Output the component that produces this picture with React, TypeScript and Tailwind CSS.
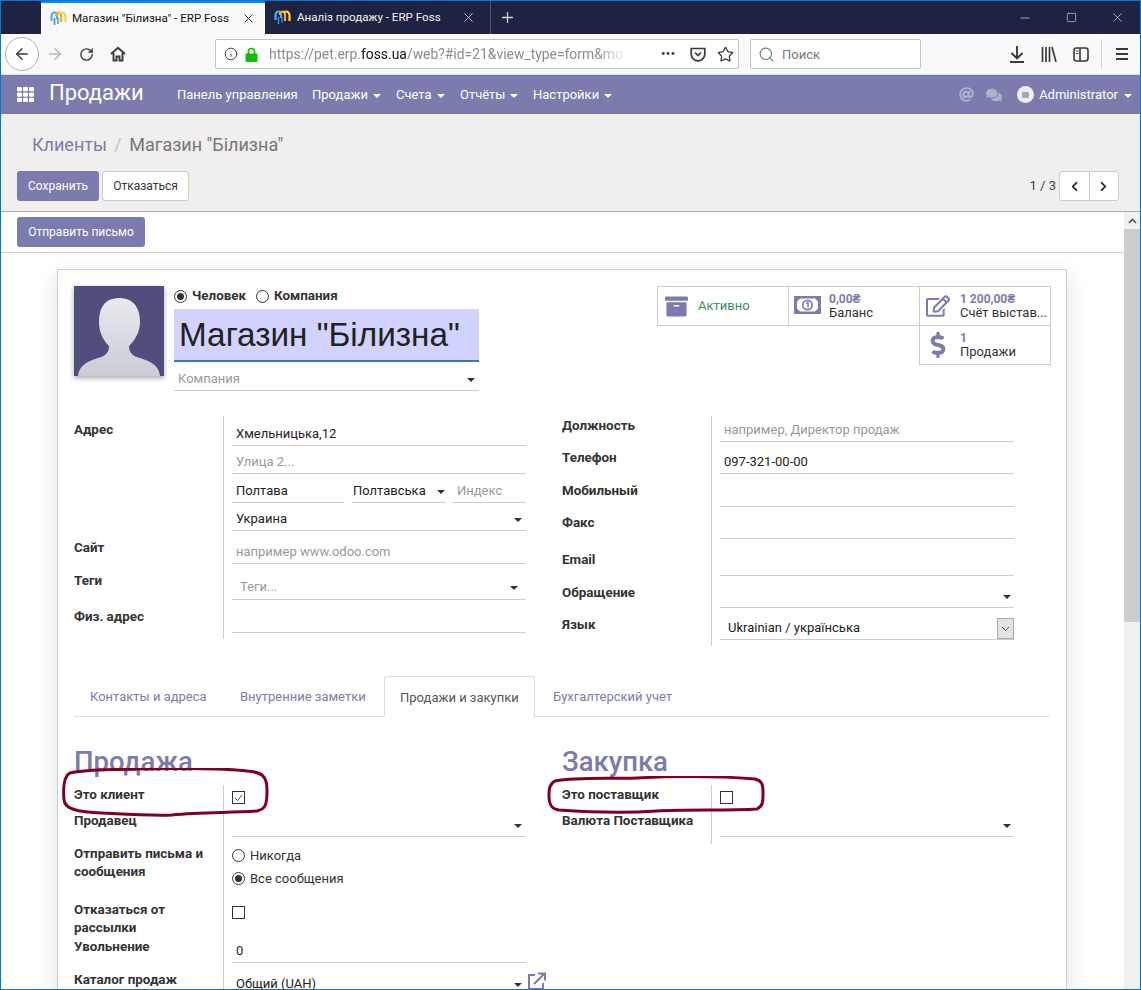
import { ArrowLeft, ArrowRight, RotateCw, Search, Star, Info, Plus, X, Minus, Square } from "lucide-react";
import { FaArchive, FaAt, FaChevronLeft, FaChevronRight, FaComments, FaDollarSign, FaRegEdit, FaTh } from "react-icons/fa";
import type { ReactNode } from "react";

function TabLogo() {
  return (
    <svg width="17" height="15" viewBox="0 0 17 15" fill="none" className="shrink-0">
      <path d="M1.5 10V6c0-3 1.500-4.500 3-4.500S7 3 7 6v2" stroke="#4aaeea" strokeWidth="2.2" />
      <path d="M4.500 14V7" stroke="#2f8fd6" strokeWidth="1.6" />
      <path d="M6 5c0-2 1-3.500 2.500-3.500S11 3 11 5v6" stroke="#f6a623" strokeWidth="2.2" />
      <path d="M9.500 3c.5-1 1.500-1.500 2.500-1.500 2 0 3.500 1.500 3.500 4.500v5" stroke="#fbd43c" strokeWidth="2.2" />
      <path d="M8 13V7" stroke="#2f8fd6" strokeWidth="1.4" />
    </svg>
  );
}

function BrowserTab({ title, active }: { title: string; active?: boolean }) {
  return (
    <div
      className={
        active
          ? "flex h-full w-[224px] items-center gap-[5px] border-t-2 border-[#0a84ff] bg-[#f9f9fa] pr-[9px] pl-[9px] text-[#111]"
          : "flex h-full w-[226px] items-center gap-[6px] border-r border-[#53566f] pr-[14px] pl-[9px] text-[#f4f4f6]"
      }
    >
      <TabLogo />
      <span className="flex-1 text-[11.6px] whitespace-nowrap">{title}</span>
      <X size={15} strokeWidth={1.6} className={active ? "text-[#333]" : "text-[#b9bac6]"} />
    </div>
  );
}

function BrowserChrome() {
  return (
    <>
      <div className="flex h-[33px] items-stretch bg-[#1e2343]">
        <div className="w-[40px]" />
        <BrowserTab title={'Магазин "Білизна" - ERP Foss'} active />
        <BrowserTab title="Аналіз продажу - ERP Foss" />
        <div className="flex w-[32px] items-center justify-center text-[#d5d6dd]">
          <Plus size={17} strokeWidth={1.8} />
        </div>
        <div className="ml-auto flex items-center text-white">
          <div className="flex w-[46px] justify-center"><Minus size={14} strokeWidth={1} /></div>
          <div className="flex w-[46px] justify-center"><Square size={11} strokeWidth={1.2} /></div>
          <div className="flex w-[46px] justify-center"><X size={15} strokeWidth={1} /></div>
        </div>
      </div>
      <div className="flex h-[41px] items-center border-b border-[#dcdcde] bg-[#f9f9fa] text-[#3a3a3c]">
        <div className="ml-[4px] flex h-[34px] w-[34px] items-center justify-center rounded-full border border-[#b1b1b3] bg-white">
          <ArrowLeft size={18} strokeWidth={1.8} />
        </div>
        <ArrowRight size={18} strokeWidth={1.8} className="ml-[7px] text-[#b4b4b6]" />
        <RotateCw size={15} strokeWidth={2.2} className="ml-[15px]" />
        <svg width="16" height="16" viewBox="0 0 16 16" className="ml-[16px]" fill="none" stroke="#3a3a3c" strokeWidth="1.9">
          <path d="M1 8l7-6.3L15 8" />
          <path d="M3.500 7v7.500h3v-4h3v4h3V7" />
        </svg>
        <div className="ml-[89px] flex h-[30px] w-[524px] items-center rounded-[2px] border border-[#c4c4c6] bg-white">
          <Info size={14} strokeWidth={1.6} className="ml-[8px]" />
          <svg width="13" height="15" viewBox="0 0 13 15" className="ml-[7px]">
            <path d="M3.500 7V4.500a3 3 0 0 1 6 0V7" fill="none" stroke="#12bc00" strokeWidth="1.7" />
            <rect x="0.500" y="6.500" width="12" height="8.500" rx="1" fill="#12bc00" />
          </svg>
          <span className="mt-[1px] ml-[11px] w-[372px] overflow-hidden text-[13.9px] whitespace-nowrap text-[#8b8b8f] [mask-image:linear-gradient(to_right,black_88%,transparent_96%)]">
            https://pet.erp.<span className="text-[#111]">foss.ua</span>/web?#id=21&view_type=form&mo
          </span>
          <span className="ml-[20px] text-[12px] font-bold tracking-[0.5px]">•••</span>
          <svg width="16" height="15" viewBox="0 0 16 15" className="ml-[15px]" fill="none" stroke="#3a3a3c" strokeWidth="1.7">
            <path d="M1.200 1.500h13.600v5.500a6.800 6.800 0 0 1-13.600 0z" />
            <path d="M5 5.500l3 3 3-3" />
          </svg>
          <Star size={17} strokeWidth={1.8} className="ml-[11px]" />
        </div>
        <div className="ml-[11px] flex h-[30px] w-[171px] items-center rounded-[2px] border border-[#c4c4c6] bg-white">
          <Search size={17} strokeWidth={1.6} className="ml-[7px] text-[#77777a]" />
          <span className="mt-[2px] ml-[7px] text-[13px] text-[#77777a]">Поиск</span>
        </div>
        <svg width="16" height="17" viewBox="0 0 16 17" className="ml-[88px]" fill="none" stroke="#3a3a3c" strokeWidth="1.9">
          <path d="M8 0v12M2.500 7L8 12.500 13.500 7M1 16h14" />
        </svg>
        <svg width="16" height="15" viewBox="0 0 16 15" className="ml-[16px]" fill="none" stroke="#3a3a3c" strokeWidth="1.7">
          <path d="M1.500 0v15M5 0v15M8.500 0v15M11 0l4 15" />
        </svg>
        <svg width="16" height="15" viewBox="0 0 16 15" className="ml-[16px]" fill="none" stroke="#3a3a3c" strokeWidth="1.600">
          <rect x="1" y="1" width="14" height="13" rx="2.500" />
          <path d="M7 1v13" />
          <path d="M3 4h2.500M3 6.500h2.500" strokeWidth="1.100" />
        </svg>
        <div className="ml-[12px] h-[30px] w-px bg-[#d7d7d9]" />
        <div className="ml-[14px] flex w-[12px] flex-col gap-[3px]">
          <div className="h-[2px] bg-[#3a3a3c]" />
          <div className="h-[2px] bg-[#3a3a3c]" />
          <div className="h-[2px] bg-[#3a3a3c]" />
        </div>
      </div>
    </>
  );
}

function Caret({ className = "" }: { className?: string }) {
  return <span className={`inline-block h-0 w-0 border-x-[4px] border-t-[4px] border-x-transparent ${className}`} />;
}

function NavBar() {
  const items = [
    { label: "Панель управления", w: "w-[135px]" },
    { label: "Продажи", caret: true, w: "w-[84px]" },
    { label: "Счета", caret: true, w: "w-[64px]" },
    { label: "Отчёты", caret: true, w: "w-[73px]" },
    { label: "Настройки", caret: true, w: "w-[90px]" },
  ];
  return (
    <div className="flex h-[39px] items-center bg-[#7c7bad] text-white">
      <FaTh size={17} className="ml-[16px]" />
      <span className="ml-[15px] w-[128px] pb-[4px] text-[22px] leading-none">Продажи</span>
      {items.map((i) => (
        <div key={i.label} className={`flex items-center gap-[5px] text-[13px] ${i.w}`}>
          {i.label}
          {i.caret && <Caret className="mt-[2px] border-t-white" />}
        </div>
      ))}
      <div className="ml-auto flex items-center">
        <FaAt size={15} className="text-[#b0afd0]" />
        <FaComments size={16} className="ml-[12px] text-[#b0afd0]" />
        <div className="ml-[15px] flex h-[17px] w-[17px] items-center justify-center rounded-full bg-[#eeeef2]">
          <div className="h-[6px] w-[7px] rounded-[1px] bg-[#a8a8b0]" />
        </div>
        <span className="ml-[5px] text-[13px]">Administrator</span>
        <Caret className="mt-[2px] mr-[8px] ml-[6px] border-t-white" />
      </div>
    </div>
  );
}

function ControlPanel() {
  return (
    <div className="h-[98px] border-b border-[#a9a9a9] bg-[#f0eeee] pt-[19px] pr-[21px] pl-[16px]">
      <div className="ml-[15px] flex h-[24px] items-center text-[18px] leading-none">
        <span className="text-[#7c7bad]">Клиенты</span>
        <span className="mr-[8px] ml-[7px] text-[#c4c4c4]">/</span>
        <span className="text-[#777]">Магазин "Білизна"</span>
      </div>
      <div className="mt-[14px] flex items-center">
        <button className="h-[30px] w-[82px] rounded-[3px] bg-[#7c7bad] text-[12px] text-white">Сохранить</button>
        <button className="ml-[3px] h-[30px] w-[87px] rounded-[3px] border border-[#ccc] bg-white text-[12px] text-[#333]">Отказаться</button>
        <span className="mr-[3px] ml-auto text-[13px] text-[#444]">1 / 3</span>
        <div className="flex h-[30px] w-[60px] rounded-[3px] border border-[#ccc] bg-white text-[#222]">
          <div className="flex flex-1 items-center justify-center border-r border-[#ccc]"><FaChevronLeft size={11} /></div>
          <div className="flex flex-1 items-center justify-center"><FaChevronRight size={11} /></div>
        </div>
      </div>
    </div>
  );
}

function Scrollbar() {
  return (
    <div className="flex w-[16px] shrink-0 flex-col bg-[#f1f1f1]">
      <div className="flex h-[17px] items-center justify-center">
        <svg width="9" height="6" viewBox="0 0 9 6" fill="none" stroke="#505050" strokeWidth="1.6"><path d="M1 5l3.500-3.500L8 5" /></svg>
      </div>
      <div className="h-[393px] bg-[#cdcdcd]" />
    </div>
  );
}

function StatButton({ icon, value, label, className = "" }: { icon: ReactNode; value: string; label: string; className?: string }) {
  return (
    <div className={`flex h-[40px] w-[132px] items-center border border-[#ccc] ${className}`}>
      <div className="flex w-[36px] shrink-0 justify-center text-[#7c7bad]">{icon}</div>
      <div className="ml-[4px] leading-[14px]">
        <div className="text-[12px] font-bold text-[#7c7bad]">{value}</div>
        <div className="text-[13px] text-[#333]">{label}</div>
      </div>
    </div>
  );
}

function MoneyIcon() {
  return (
    <svg width="27" height="18" viewBox="0 0 27 18" className="-mt-[3px]">
      <path d="M0 0h27v18H0z" fill="#7c7bad" />
      <path d="M6 2.500h15l3 3v7l-3 3H6l-3-3v-7z" fill="#fff" />
      <circle cx="13.500" cy="9" r="5.500" fill="#7c7bad" />
      <circle cx="13.500" cy="9" r="3.800" fill="#fff" />
      <path d="M12 7.500l2-1.200V11.500" fill="none" stroke="#7c7bad" strokeWidth="1.400" />
    </svg>
  );
}

function Radio({ checked, className = "" }: { checked?: boolean; className?: string }) {
  return (
    <span className={`flex h-[13px] w-[13px] shrink-0 items-center justify-center rounded-full border border-[#333] bg-white ${className}`}>
      {checked && <span className="h-[7px] w-[7px] rounded-full bg-[#333]" />}
    </span>
  );
}

function Checkbox({ checked }: { checked?: boolean }) {
  return (
    <span className="flex h-[13px] w-[13px] items-center justify-center border border-[#333] bg-white">
      {checked && (
        <svg width="9" height="8" viewBox="0 0 9 8" fill="none" stroke="#444" strokeWidth="1"><path d="M1 4l2.500 2.500L8 1" /></svg>
      )}
    </span>
  );
}

// one underlined input; h is the full height down to the line
function Input({
  h,
  text,
  placeholder,
  caret,
  className = "",
  indent = "pl-[4px]",
  pb = "pb-[2px]",
  caretMr = "mr-[4px]",
}: {
  h: string;
  text?: string;
  placeholder?: string;
  caret?: boolean;
  className?: string;
  indent?: string;
  pb?: string;
  caretMr?: string;
}) {
  return (
    <div className={`flex items-end border-b border-[#ccc] ${pb} ${indent} ${h} ${className}`}>
      <span className={`flex-1 truncate leading-[18px] ${text ? "text-[#222]" : "text-[#999]"}`}>{text ?? placeholder}</span>
      {caret && <Caret className={`mb-[6px] border-t-[#333] ${caretMr}`} />}
    </div>
  );
}

function Row({ label, labelPad, h, children }: { label: ReactNode; labelPad: string; h: string; children?: ReactNode }) {
  return (
    <div className={`flex ${h}`}>
      <div className={`mt-[1px] w-[149px] shrink-0 text-[13.4px] leading-[18px] font-bold text-[#333] ${labelPad}`}>{label}</div>
      <div className="flex-1 border-l border-[#ccc] pl-[8px]">{children}</div>
    </div>
  );
}

function HeadRow() {
  return (
    <div className="flex">
      <div className="h-[90px] w-[90px] shrink-0 shadow-[0_2px_5px_rgba(0,0,0,0.35)]">
        <svg viewBox="0 0 90 90" width="90" height="90">
          <defs>
            <linearGradient id="face" x1="0" y1="0" x2="0" y2="1">
              <stop offset="0" stopColor="#e9eaef" />
              <stop offset="1" stopColor="#c9cbd6" />
            </linearGradient>
          </defs>
          <rect width="90" height="90" fill="#4f4e7d" />
          <path d="M4 90C5 80 12 76 24 72 32 70 35 66 35 60 29 54 25 46 25 36 25 20 32 12 45 12 58 12 66 20 66 36 66 46 61 54 55 60 55 66 58 70 66 72 78 76 85 80 86 90Z" fill="url(#face)" />
        </svg>
      </div>
      <div className="ml-[10px] w-[305px]">
        <div className="flex h-[23px] items-center pb-[2px] text-[13.4px] font-bold text-[#333]">
          <Radio checked />
          <span className="ml-[5px]">Человек</span>
          <Radio className="ml-[10px]" />
          <span className="ml-[5px]">Компания</span>
        </div>
        <div className="h-[53px] border-b-2 border-[#337ab7] bg-[#d2d2ff] pl-[5px] font-['Liberation_Sans',sans-serif] text-[33.3px] leading-[51px] text-[#212121]">
          Магазин "Білизна"
        </div>
        <Input h="h-[29px]" placeholder="Компания" caret />
      </div>
      <div className="-mr-px ml-auto flex w-[394px] flex-wrap justify-end self-start">
        <div className="flex h-[40px] w-[132px] items-center border border-[#ccc]">
          <FaArchive size={23} className="ml-[7px] text-[#7c7bad]" />
          <span className="ml-[10px] text-[13px] text-[#3e8e5a]">Активно</span>
        </div>
        <StatButton className="-ml-px" icon={<MoneyIcon />} value="0,00₴" label="Баланс" />
        <StatButton className="-ml-px" icon={<FaRegEdit size={24} />} value="1 200,00₴" label="Счёт выстав..." />
        <StatButton className="-mt-px" icon={<FaDollarSign size={26} />} value="1" label="Продажи" />
      </div>
    </div>
  );
}

function MainFields() {
  return (
    <div className="mt-[25px] flex">
      <div className="w-[452px]">
        <Row label="Адрес" labelPad="pt-[4px]" h="h-[118px]">
          <Input h="h-[30px]" text="Хмельницька,12" />
          <Input h="h-[28px]" placeholder="Улица 2..." />
          <div className="flex gap-[8px]">
            <Input h="h-[29px]" text="Полтава" className="w-[112px]" />
            <Input h="h-[29px]" text="Полтавська" caret className="-mr-[2px] w-[94px]" indent="pl-[1px]" caretMr="mr-[1px]" />
            <Input h="h-[29px]" placeholder="Индекс" className="flex-1" indent="pl-[5px]" />
          </div>
          <Input h="h-[28px]" text="Украина" caret />
        </Row>
        <Row label="Сайт" labelPad="pt-[4px]" h="h-[33px]">
          <Input h="h-[30px]" placeholder="например www.odoo.com" />
        </Row>
        <Row label="Теги" labelPad="pt-[4px]" h="h-[33px]">
          <Input h="h-[33px]" placeholder="Теги..." caret indent="pl-[8px]" pb="pb-[3px]" caretMr="mr-[8px]" />
        </Row>
        <Row label="Физ. адрес" labelPad="pt-[7px]" h="h-[39px]">
          <Input h="h-[33px]" />
        </Row>
      </div>
      <div className="ml-[36px] w-[452px]">
        <Row label="Должность" labelPad="" h="h-[32px]">
          <Input h="h-[26px]" placeholder="например, Директор продаж" />
        </Row>
        <Row label="Телефон" labelPad="" h="h-[33px]">
          <Input h="h-[26px]" text="097-321-00-00" />
        </Row>
        <Row label="Мобильный" labelPad="" h="h-[32px]">
          <Input h="h-[26px]" />
        </Row>
        <Row label="Факс" labelPad="" h="h-[37px]">
          <Input h="h-[26px]" />
        </Row>
        <Row label="Email" labelPad="" h="h-[33px]">
          <Input h="h-[26px]" />
        </Row>
        <Row label="Обращение" labelPad="" h="h-[32px]">
          <Input h="h-[25px]" caret caretMr="mr-[3px]" />
        </Row>
        <Row label="Язык" labelPad="" h="h-[31px]">
          <div className="flex h-[25px] items-end border-b border-[#ccc] pl-[8px]">
            <span className="flex-1 pb-[2px] leading-[18px] text-[#222]">Ukrainian / українська</span>
            <span className="flex h-[21px] w-[17px] items-center justify-center border border-[#a9a9a9] bg-[#e3e3e3]">
              <svg width="9" height="6" viewBox="0 0 9 6" fill="none" stroke="#555" strokeWidth="1"><path d="M1 1l3.500 3.500L8 1" /></svg>
            </span>
          </div>
        </Row>
      </div>
    </div>
  );
}

function Tabs() {
  return (
    <div className="mt-[30px] flex h-[41px] items-stretch border-b border-[#ddd]">
      <div className="flex w-[150px] items-center pt-[2px] pl-[16px] text-[#7c7bad]">Контакты и адреса</div>
      <div className="flex w-[160px] items-center pt-[2px] pl-[16px] text-[#7c7bad]">Внутренние заметки</div>
      <div className="-mb-px flex w-[151px] items-center rounded-t-[3px] border-x border-t border-[#ddd] bg-white pt-[2px] pl-[15px] text-[#555]">Продажи и закупки</div>
      <div className="flex items-center pt-[2px] pl-[18px] text-[#7c7bad]">Бухгалтерский учет</div>
    </div>
  );
}

function SalesPurchases() {
  return (
    <div className="relative mt-[26px] flex">
      <div className="w-[452px]">
        <h2 className="h-[42px] text-[27.5px] leading-[38px] font-medium text-[#7c7bad]">Продажа</h2>
        <Row label="Это клиент" labelPad="" h="h-[26px]">
          <div className="pt-[6px]"><Checkbox checked /></div>
        </Row>
        <Row label="Продавец" labelPad="" h="h-[26px]">
          <Input h="h-[26px]" caret />
        </Row>
        <Row label={<>Отправить письма и<br />сообщения</>} labelPad="pt-[7px]" h="h-[62px]">
          <div className="flex h-[29px] items-end gap-[5px] pb-[1px] text-[#333]"><Radio className="mb-[3px]" />Никогда</div>
          <div className="flex h-[23px] items-end gap-[5px] pb-[1px] text-[#333]"><Radio checked className="mb-[3px]" />Все сообщения</div>
        </Row>
        <Row label={<>Отказаться от<br />рассылки</>} labelPad="pt-[1px]" h="h-[37px]">
          <div className="pt-[7px]"><Checkbox /></div>
        </Row>
        <Row label="Увольнение" labelPad="pt-[1px]" h="h-[33px]">
          <Input h="h-[27px]" text="0" />
        </Row>
        <Row label="Каталог продаж" labelPad="pt-[1px]" h="h-[26px]">
          <div className="flex items-center">
            <Input h="h-[27px]" text="Общий (UAH)" caret className="flex-1" />
            <svg width="20" height="18" viewBox="0 0 20 18" fill="none" stroke="#7c7bad" strokeWidth="2" className="-mt-[3px] mr-[-21px] ml-[1px]">
              <path d="M8 3H2v14h14v-6" />
              <path d="M7 12L17 2M11 1.500h7v7" />
            </svg>
          </div>
        </Row>
      </div>
      <div className="ml-[36px] w-[452px]">
        <h2 className="h-[42px] text-[27.5px] leading-[38px] font-medium text-[#7c7bad]">Закупка</h2>
        <Row label="Это поставщик" labelPad="" h="h-[26px]">
          <div className="pt-[6px]"><Checkbox /></div>
        </Row>
        <Row label="Валюта Поставщика" labelPad="" h="h-[33px]">
          <Input h="h-[26px]" caret caretMr="mr-[3px]" />
        </Row>
      </div>
      {/* hand drawn marks from the person who took the screenshot */}
      <svg width="210" height="50" viewBox="0 0 210 50" fill="none" stroke="#7f0020" strokeWidth="3" className="absolute top-[25px] -left-[12px]">
        <path d="M8 5C25 1 50 2 70 1 100 0 160 0 185 3 200 4 205 8 205 22 205 36 204 41 195 43 170 45 140 44 110 47 90 48 60 46 40 45 15 44 3 41 2 32 1 20 2 8 8 5Z" />
      </svg>
      <svg width="222" height="40" viewBox="0 0 220 40" fill="none" stroke="#7f0020" strokeWidth="3" className="absolute top-[33px] left-[472px]">
        <path d="M8 5C30 1 60 3 90 2 130 0 170 0 208 3 215 5 216 8 216 17 216 26 216 30 210 33 180 35 140 33 110 35 80 37 40 36 12 34 4 33 2 28 2 20 2 14 2 8 8 5Z" />
      </svg>
    </div>
  );
}

export default function App() {
  return (
    <div className="flex h-[990px] w-[1141px] flex-col overflow-hidden border border-[#0078d7] bg-white font-['Roboto',sans-serif] text-[13px]">
      <BrowserChrome />
      <NavBar />
      <ControlPanel />
      <div className="flex min-h-0 flex-1">
        <div className="min-w-0 flex-1 overflow-hidden">
          <div className="flex h-[41px] items-start border-b border-[#ccc] pt-[5px] pl-[16px]">
            <button className="h-[30px] w-[128px] rounded-[3px] bg-[#7c7bad] text-[12px] text-white">Отправить письмо</button>
          </div>
          <div className="mt-[16px] ml-[56px] w-[1010px] border border-[#ccc] px-[16px] pt-[16px] shadow-[0_5px_20px_rgba(0,0,0,0.12)]">
            <HeadRow />
            <MainFields />
            <Tabs />
            <SalesPurchases />
          </div>
        </div>
        <Scrollbar />
      </div>
    </div>
  );
}
